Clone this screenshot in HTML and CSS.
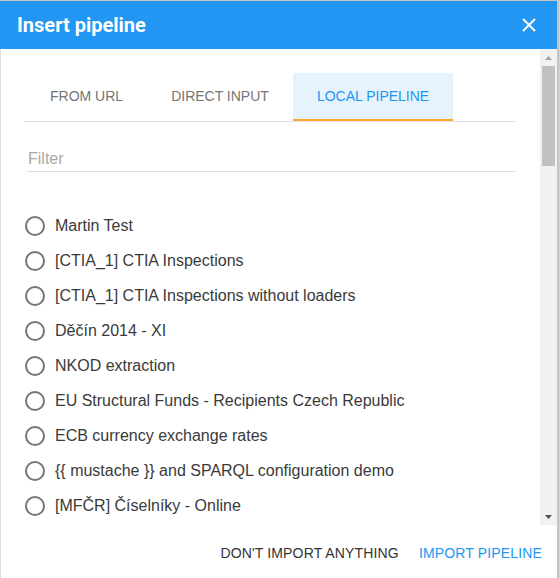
FILE: index.html
```html
<!DOCTYPE html>
<html lang="en">
<head>
<meta charset="utf-8">
<title>Insert pipeline</title>
<link rel="stylesheet" href="styles.css">
</head>
<body>
<div class="dialog">
  <header class="dialog-header">
    <h1 class="dialog-title">Insert pipeline</h1>
    <button class="close-btn" aria-label="Close">
      <svg width="14" height="14" viewBox="0 0 14 14"><path d="M1 1L13 13M13 1L1 13" stroke="#fff" stroke-width="2" fill="none"/></svg>
    </button>
  </header>
  <div class="dialog-main">
    <div class="dialog-body">
      <div class="tabs">
        <div class="tab">From URL</div>
        <div class="tab">Direct input</div>
        <div class="tab active">Local pipeline</div>
      </div>
      <div class="filter">
        <input class="filter-input" type="text" placeholder="Filter">
      </div>
      <ul class="pipeline-list">
        <li class="item"><span class="radio"></span><span class="label">Martin Test</span></li>
        <li class="item"><span class="radio"></span><span class="label">[CTIA_1] CTIA Inspections</span></li>
        <li class="item"><span class="radio"></span><span class="label">[CTIA_1] CTIA Inspections without loaders</span></li>
        <li class="item"><span class="radio"></span><span class="label">Děčín 2014 - XI</span></li>
        <li class="item"><span class="radio"></span><span class="label">NKOD extraction</span></li>
        <li class="item"><span class="radio"></span><span class="label">EU Structural Funds - Recipients Czech Republic</span></li>
        <li class="item"><span class="radio"></span><span class="label">ECB currency exchange rates</span></li>
        <li class="item"><span class="radio"></span><span class="label">{{ mustache }} and SPARQL configuration demo</span></li>
        <li class="item"><span class="radio"></span><span class="label">[MFČR] Číselníky - Online</span></li>
      </ul>
    </div>
    <div class="scrollbar" aria-hidden="true">
      <div class="sb-btn">
        <svg width="7" height="4" viewBox="0 0 7 4"><path d="M0 4L3.5 0L7 4Z" fill="#a3a3a3"/></svg>
      </div>
      <div class="sb-thumb"></div>
      <div class="sb-track"></div>
      <div class="sb-btn">
        <svg width="7" height="4" viewBox="0 0 7 4"><path d="M0 0L3.5 4L7 0Z" fill="#505050"/></svg>
      </div>
    </div>
  </div>
  <footer class="dialog-footer">
    <button class="btn">Don't import anything</button>
    <button class="btn primary">Import pipeline</button>
  </footer>
</div>
</body>
</html>
```

FILE: styles.css
```css
html, body {
  margin: 0;
  padding: 0;
}
body {
  background: #c4c4c4;
  font-family: "Liberation Sans", Arial, sans-serif;
  height: 578px;
  overflow: hidden;
}
.dialog {
  margin-top: 1px;
  width: 557px;
  height: 577px;
  background: #fff;
  display: flex;
  flex-direction: column;
}
.dialog-header {
  height: 48px;
  flex: none;
  background: #2196f3;
  display: flex;
  align-items: center;
  justify-content: space-between;
  padding: 0 0 0 17px;
}
.dialog-title {
  margin: 0;
  font-family: Roboto, "Liberation Sans", sans-serif;
  font-weight: 700;
  font-size: 20px;
  color: #fff;
  line-height: 1;
  padding-bottom: 1px;
}
.close-btn {
  width: 48px;
  height: 48px;
  margin-right: 4px;
  border: 0;
  background: transparent;
  padding: 0;
  display: flex;
  align-items: center;
  justify-content: center;
}
.dialog-main {
  height: 476px;
  flex: none;
  display: flex;
  border-left: 1px solid #dedede;
}
.dialog-body {
  flex: 1;
  min-width: 0;
  overflow: hidden;
  padding: 0 24px 0 23px;
}
.scrollbar {
  width: 17px;
  flex: none;
  background: #f1f1f1;
  display: flex;
  flex-direction: column;
}
.sb-btn {
  height: 17px;
  flex: none;
  display: flex;
  align-items: center;
  justify-content: center;
}
.sb-thumb {
  height: 100px;
  flex: none;
  margin: 0 2px;
  background: #c1c1c1;
}
.sb-track {
  flex: 1;
}
.tabs {
  margin-top: 24px;
  display: flex;
  border-bottom: 1px solid #e0e0e0;
  padding-left: 2px;
}
.tab {
  height: 46px;
  padding: 0 24px;
  display: flex;
  align-items: center;
  font-size: 14px;
  text-transform: uppercase;
  color: #757575;
  border-bottom: 2px solid transparent;
}
.tab.active {
  background: #e6f3fd;
  color: #2196f3;
  border-bottom-color: #ffa62e;
}
.filter {
  margin-top: 19px;
  padding: 0 1px 0 3px;
}
.filter-input {
  display: block;
  width: 100%;
  box-sizing: border-box;
  height: 31px;
  border: 0;
  border-bottom: 1px solid #e0e0e0;
  padding: 5px 0 0 1px;
  font-family: "Liberation Sans", Arial, sans-serif;
  font-size: 16px;
  color: #333;
  outline: none;
  background: transparent;
}
.filter-input::placeholder {
  color: #a8a8a8;
}
.pipeline-list {
  list-style: none;
  margin: 36px 0 0;
  padding: 0;
}
.item {
  height: 35px;
  display: flex;
  align-items: center;
  padding-left: 1px;
}
.radio {
  width: 20px;
  height: 20px;
  box-sizing: border-box;
  border: 2px solid #757575;
  border-radius: 50%;
  flex: none;
  margin-right: 10px;
}
.label {
  font-size: 16px;
  color: #3a3a3a;
  white-space: nowrap;
}
.dialog-footer {
  flex: 1;
  display: flex;
  justify-content: flex-end;
  align-items: center;
  border-left: 1px solid #dedede;
  padding: 2px 7px 0 0;
  gap: 4px;
}
.btn {
  border: 0;
  background: transparent;
  font-family: "Liberation Sans", Arial, sans-serif;
  font-size: 14px;
  letter-spacing: 0.15px;
  text-transform: uppercase;
  color: #333;
  padding: 8px 8px;
}
.btn.primary {
  color: #2196f3;
}
```
